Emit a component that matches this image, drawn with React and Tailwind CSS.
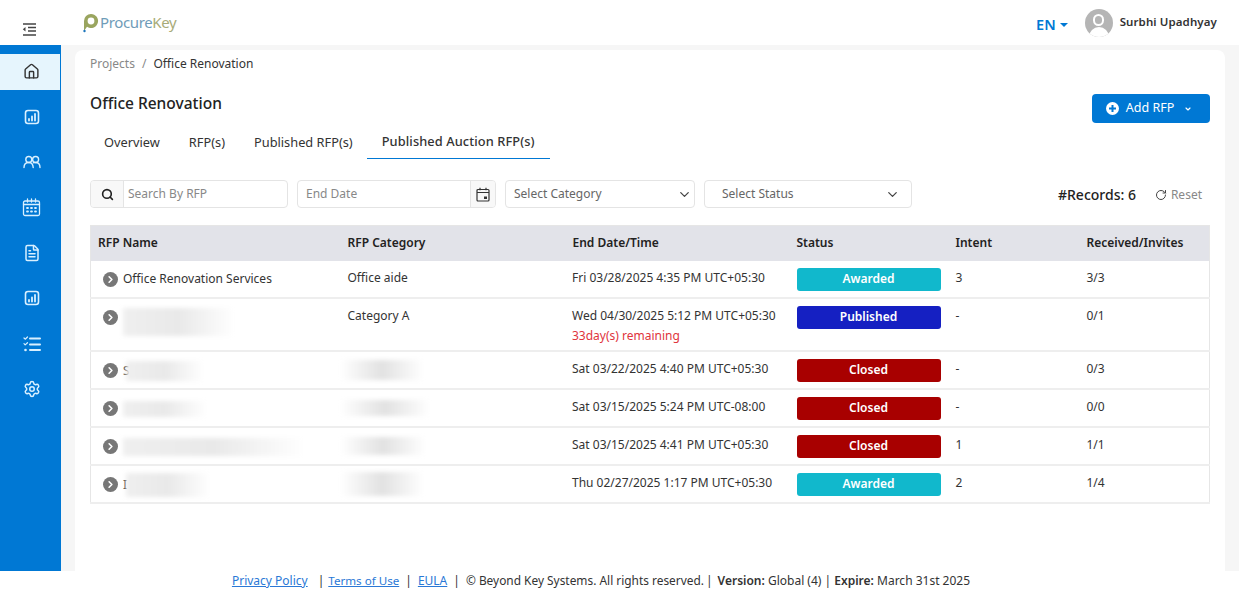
import { ChevronDown, ChevronRight, FileText, Home, RotateCw, Search, Settings } from "lucide-react";

const rows = [
  {
    name: "Office Renovation Services",
    category: "Office aide",
    date: "Fri 03/28/2025 4:35 PM UTC+05:30",
    status: "Awarded",
    intent: "3",
    received: "3/3",
  },
  {
    nameBlur: "w-[112px] h-[28px] mt-[8px]",
    category: "Category A",
    date: "Wed 04/30/2025 5:12 PM UTC+05:30",
    remaining: "33day(s) remaining",
    status: "Published",
    intent: "-",
    received: "0/1",
  },
  {
    nameLetter: "S",
    nameBlur: "w-[78px] h-[20px] ml-[-4px]",
    catBlur: "w-[84px] h-[20px]",
    date: "Sat 03/22/2025 4:40 PM UTC+05:30",
    status: "Closed",
    intent: "-",
    received: "0/3",
  },
  {
    nameBlur: "w-[84px] h-[16px]",
    catBlur: "w-[90px] h-[16px]",
    date: "Sat 03/15/2025 5:24 PM UTC-08:00",
    status: "Closed",
    intent: "-",
    received: "0/0",
  },
  {
    nameBlur: "w-[182px] h-[18px]",
    catBlur: "w-[86px] h-[18px]",
    date: "Sat 03/15/2025 4:41 PM UTC+05:30",
    status: "Closed",
    intent: "1",
    received: "1/1",
  },
  {
    nameLetter: "I",
    nameBlur: "w-[84px] h-[24px] ml-[-1px]",
    catBlur: "w-[84px] h-[24px]",
    date: "Thu 02/27/2025 1:17 PM UTC+05:30",
    status: "Awarded",
    intent: "2",
    received: "1/4",
  },
];

const statusColors = {
  Awarded: "bg-[#11b8cc]",
  Published: "bg-[#1520c2]",
  Closed: "bg-[#a80000]",
};

function ReportIcon() {
  return (
    <svg width="18" height="18" viewBox="0 0 18 18" fill="none" stroke="#d9f0ff" strokeWidth="1.6" strokeLinecap="round">
      <rect x="2.5" y="2.5" width="13" height="13" rx="2.5" />
      <path d="M6 12.5v-1.5M9 12.5V8.5M12 12.5V6" strokeWidth="1.8" />
    </svg>
  );
}

function UsersIcon() {
  return (
    <svg width="18" height="18" viewBox="0 0 18 18" fill="none" stroke="#d9f0ff" strokeWidth="1.4" strokeLinecap="round">
      <circle cx="5.8" cy="6.5" r="3" />
      <circle cx="12.6" cy="6.5" r="3" />
      <path d="M1 14.5c0-3 2-5 4.8-5s4.2 2 4.4 5M10.5 9.7c.6-.2 1.3-.2 2.1-.2 2.8 0 4.4 2 4.4 5" />
    </svg>
  );
}

function CalendarIcon() {
  return (
    <svg width="19" height="19" viewBox="0 0 19 19" fill="none" stroke="#d9f0ff" strokeWidth="1.3" strokeLinecap="round">
      <rect x="1.5" y="3" width="16" height="14.5" rx="1.5" />
      <path d="M1.5 6.5h16M5.5 1v3M9.5 1v3M13.5 1v3" />
      <path d="M5 10h1M9 10h1M13 10h1M5 13.5h1M9 13.5h1M13 13.5h1" strokeWidth="1.8" />
    </svg>
  );
}

function ChecklistIcon() {
  return (
    <svg width="18" height="18" viewBox="0 0 18 18" fill="none" stroke="#d9f0ff" strokeLinecap="round" strokeLinejoin="round">
      <path d="M7 3.5h10M7 9.5h10M7 15h10" strokeWidth="2" />
      <path d="M1 3l1.2 1.2L4.5 2M1 8.7l1.2 1.2 2.3-2.2" strokeWidth="1.2" />
      <circle cx="2.5" cy="15" r="1.3" fill="#d9f0ff" stroke="none" />
    </svg>
  );
}

function Blurred({ size, center }) {
  return (
    <div
      className={`shrink-0 blur-[2px] ${size} ${
        center
          ? "bg-gradient-to-r from-white via-[#e2e2e2] to-white"
          : "bg-gradient-to-r from-[#efefef] via-[#e9e9e9] to-white"
      }`}
    />
  );
}

export default function App() {
  return (
    <div className="flex h-[590px] w-[1239px] flex-col overflow-hidden bg-white font-['Noto_Sans',sans-serif] text-[13px] text-[#333]">
      {/* Header */}
      <header className="flex h-[45px] shrink-0 items-center">
        <div className="flex w-[61px] justify-center pr-[3px] pt-[14px]">
          <svg width="15" height="13" viewBox="0 0 15 13" fill="none" stroke="#444" strokeWidth="1.3">
            <path d="M1 1h13M6 4.5h8M6 8h8M1 12h13" />
            <path d="M3.5 4L.8 6.2l2.7 2.2z" fill="#444" stroke="none" />
          </svg>
        </div>
        <div className="ml-[22px] flex items-center gap-[1px]">
          <svg width="16" height="20" viewBox="0 0 16 20">
            <path d="M8 1a7 7 0 1 1 -4 12.7L1 18V8a7 7 0 0 1 7-7z" fill="#9aa55f" />
            <circle cx="8" cy="8" r="3.4" fill="white" />
            <circle cx="1.5" cy="18" r="1.2" fill="#1b75bb" />
          </svg>
          <span className="text-[15px] tracking-tight">
            <span className="text-[#6f9cb8]">Procure</span>
            <span className="text-[#a8ab78]">Key</span>
          </span>
        </div>
        <div className="ml-auto flex items-center pr-[22px]">
          <span className="pt-[4px] text-[14.5px] font-semibold text-[#0078d4]">EN</span>
          <span className="ml-1 mt-[4px] h-0 w-0 border-x-[4px] border-t-[4px] border-x-transparent border-t-[#0078d4]" />
          <div className="ml-[17px] h-[28px] w-[28px] overflow-hidden rounded-full bg-[#b5b5b5]">
            <div className="mx-auto mt-[5px] h-[12px] w-[11px] rounded-full border-2 border-white" />
            <div className="mx-auto mt-[1px] h-[12px] w-[20px] rounded-t-full bg-white" />
          </div>
          <span className="ml-[7px] pb-[2px] text-[11.5px] font-semibold tracking-[0.1px] text-[#333]">Surbhi Upadhyay</span>
        </div>
      </header>

      <div className="flex min-h-0 flex-1">
        {/* Sidebar */}
        <aside className="flex w-[61px] shrink-0 flex-col items-center bg-[#0078d4] pt-[9px]">
          <div className="flex h-[36px] w-full items-center justify-center border-r border-[#0078d4] bg-[#e6f5fd] pb-[1px] pl-[2px]">
            <Home size={17} className="text-[#333]" />
          </div>
          <div className="flex flex-col items-center pl-[2px]">
            <div className="flex h-[45.3px] items-center justify-center pt-[9px]"><ReportIcon /></div>
            <div className="flex h-[45.3px] items-center justify-center pt-[9px]"><UsersIcon /></div>
            <div className="flex h-[45.3px] items-center justify-center pt-[9px]"><CalendarIcon /></div>
            <div className="flex h-[45.3px] items-center justify-center pt-[9px]">
              <FileText size={18} className="text-[#d9f0ff]" />
            </div>
            <div className="flex h-[45.3px] items-center justify-center pt-[9px]"><ReportIcon /></div>
            <div className="flex h-[45.3px] items-center justify-center pt-[9px]"><ChecklistIcon /></div>
            <div className="flex h-[45.3px] items-center justify-center pt-[9px]">
              <Settings size={18} className="text-[#d9f0ff]" />
            </div>
          </div>
        </aside>

        {/* Main */}
        <main className="min-w-0 flex-1 bg-[#f6f6f6] px-[14px] pt-[5px]">
          <div className="h-full rounded-t-lg bg-white px-[15px] pt-[5px]">
            <div className="flex h-[18px] items-center text-[12px]">
              <span className="text-[#888]">Projects</span>
              <span className="mx-[7px] text-[#888]">/</span>
              <span className="text-[#333]">Office Renovation</span>
            </div>

            <div className="mt-[19px] flex items-start justify-between">
              <h1 className="text-[15.5px] font-medium leading-[22px] text-[#222]">Office Renovation</h1>
              <button className="mt-[2px] flex h-[29px] w-[118px] items-center justify-center rounded bg-[#0078d4] pr-[4px] text-[12.5px] text-white">
                <svg width="13" height="13" viewBox="0 0 13 13">
                  <circle cx="6.5" cy="6.5" r="6.5" fill="white" />
                  <path d="M6.5 3v7M3 6.5h7" stroke="#0078d4" strokeWidth="2" />
                </svg>
                <span className="ml-[7px]">Add RFP</span>
                <ChevronDown size={8} strokeWidth={3.5} className="ml-[10px]" />
              </button>
            </div>

            {/* Tabs */}
            <div className="mt-[3px] flex h-[33px] items-center text-[12.8px] text-[#333]">
              <span className="ml-[14px]">Overview</span>
              <span className="ml-[29px]">RFP(s)</span>
              <span className="ml-[29px]">Published RFP(s)</span>
              <span className="ml-[14px] flex h-full items-center border-b border-[#0078d4] px-[15px] font-medium tracking-[0.1px]">
                Published Auction RFP(s)
              </span>
            </div>

            {/* Filters */}
            <div className="mt-[21px] flex h-[28px] items-center text-[12px]">
              <div className="flex h-full w-[198px] overflow-hidden rounded border border-[#e4e4e4]">
                <div className="flex w-[33px] items-center justify-center border-r border-[#e4e4e4] bg-[#f8f8f8]">
                  <Search size={13} strokeWidth={3} className="text-[#222]" />
                </div>
                <div className="flex items-center pl-[4px] text-[#888]">Search By RFP</div>
              </div>
              <div className="ml-[9px] flex h-full w-[199px] overflow-hidden rounded border border-[#e4e4e4]">
                <div className="flex flex-1 items-center pl-[8px] text-[#888]">End Date</div>
                <div className="flex w-[25px] items-center justify-center border-l border-[#e4e4e4] bg-[#f8f8f8]">
                  <svg width="14" height="15" viewBox="0 0 14 15" fill="none" stroke="#333" strokeWidth="1.2">
                    <rect x="1" y="2.5" width="12" height="11.5" rx="1" />
                    <path d="M1 5.5h12M4 .8v2.4M10 .8v2.4" />
                    <rect x="8" y="9.5" width="3" height="2.5" fill="#333" stroke="none" />
                  </svg>
                </div>
              </div>
              <div className="ml-[9px] flex h-full w-[190px] items-center justify-between rounded border border-[#e4e4e4] pl-[8px] pr-[2px] text-[#666]">
                Select Category
                <ChevronDown size={15} className="text-[#444]" />
              </div>
              <div className="ml-[9px] flex h-full w-[208px] items-center justify-between rounded border border-[#e4e4e4] pl-[17px] pr-[11px] text-[#666]">
                Select Status
                <ChevronDown size={15} className="text-[#444]" />
              </div>
              <span className="ml-auto text-[14px] font-medium text-[#222]">#Records: 6</span>
              <span className="ml-[19px] mr-[8px] mt-[2px] flex items-center text-[#888]">
                <RotateCw size={12} className="mr-[4px] text-[#444]" />
                Reset
              </span>
            </div>

            {/* Table */}
            <table className="mt-[17px] w-[1120px] table-fixed border-collapse border border-[#e6e6e6] text-[12px]">
              <thead>
                <tr className="h-[35px] bg-[#e2e3e9] text-left text-[#222]">
                  <th className="w-[249px] pl-[7px] font-semibold">RFP Name</th>
                  <th className="w-[225px] pl-[8px] font-semibold">RFP Category</th>
                  <th className="w-[225px] pl-[8px] font-semibold">End Date/Time</th>
                  <th className="w-[158px] pl-[7px] font-semibold">Status</th>
                  <th className="w-[131px] pl-[8px] font-semibold">Intent</th>
                  <th className="pl-[8px] font-semibold">Received/Invites</th>
                </tr>
              </thead>
              <tbody>
                {rows.map((row, i) => (
                  <tr key={i} className="border-b-2 border-[#eeeeee] align-top">
                    <td className="pb-[5px] pl-[12px] pt-[7px]">
                      <div className="flex h-[24px] items-center">
                        <span className="mr-[5px] flex h-[15px] w-[15px] shrink-0 items-center justify-center rounded-full bg-[#777]">
                          <ChevronRight size={11} strokeWidth={3.5} className="text-white" />
                        </span>
                        {row.name && <span className="mt-[-2px] text-[#333]">{row.name}</span>}
                        {row.nameLetter && <span className="text-[#333]">{row.nameLetter}</span>}
                        {row.nameBlur && <Blurred size={row.nameBlur} />}
                      </div>
                    </td>
                    <td className="pb-[6px] pl-[8px] pt-[7px]">
                      {row.category ? (
                        <div className="leading-[20px] text-[#333]">{row.category}</div>
                      ) : (
                        <div className="ml-[-8px] flex h-[22px] items-center">
                          <Blurred size={row.catBlur} center />
                        </div>
                      )}
                    </td>
                    <td className="pb-[4px] pl-[7.5px] pt-[7px] leading-[20px] text-[#333]">
                      <div>{row.date}</div>
                      {row.remaining && <div className="text-[#e0343c]">{row.remaining}</div>}
                    </td>
                    <td className="pb-[6px] pl-[7px] pt-[7px]">
                      <div className={`flex h-[23px] w-[144px] items-center justify-center rounded-[3px] text-[12px] font-semibold text-white ${statusColors[row.status]}`}>
                        {row.status}
                      </div>
                    </td>
                    <td className="pb-[6px] pl-[8px] pt-[7px] leading-[20px] text-[#333]">{row.intent}</td>
                    <td className="pb-[6px] pl-[8px] pt-[7px] leading-[20px] text-[#333]">{row.received}</td>
                  </tr>
                ))}
              </tbody>
            </table>
          </div>
        </main>
      </div>

      {/* Footer */}
      <footer className="flex h-[19px] shrink-0 items-center justify-center whitespace-pre pr-[37px] pt-[1px] text-[12px] text-[#333]">
        <a className="text-[#2a78d6] underline">Privacy Policy</a>
        <span className="ml-[10px]">|</span>
        <a className="ml-[4px] text-[11.6px] text-[#2a78d6] underline">Terms of Use</a>
        <span className="ml-[6px]">|</span>
        <a className="ml-[6px] text-[#2a78d6] underline">EULA</a>
        <span className="ml-[6px]">|</span>
        <span className="ml-[6px] text-[11.9px]">© Beyond Key Systems. All rights reserved.</span>
        <span className="ml-[2px]">|</span>
        <b className="ml-[5px] font-semibold">Version:</b>
        <span> Global (4) | </span>
        <b className="font-semibold">Expire:</b>
        <span> March 31st 2025</span>
      </footer>
    </div>
  );
}
